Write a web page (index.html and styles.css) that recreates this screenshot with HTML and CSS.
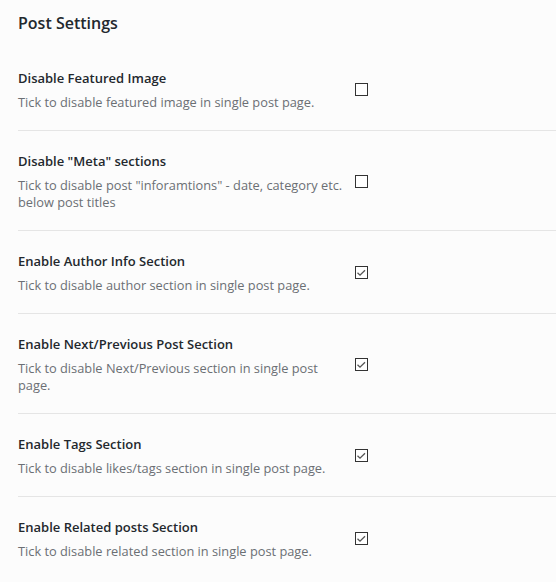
FILE: index.html
```html
<!DOCTYPE html>
<html>
<head>
<meta charset="utf-8">
<link rel="stylesheet" href="styles.css">
</head>
<body>
<div class="page">
  <h2 class="title">Post Settings</h2>
  <div class="settings">
    <div class="row">
      <div class="text">
        <div class="label">Disable Featured Image</div>
        <div class="desc">Tick to disable featured image in single post page.</div>
      </div>
      <span class="box"></span>
    </div>
    <div class="row">
      <div class="text">
        <div class="label">Disable "Meta" sections</div>
        <div class="desc">Tick to disable post "inforamtions" - date, category etc. below post titles</div>
      </div>
      <span class="box"></span>
    </div>
    <div class="row">
      <div class="text">
        <div class="label">Enable Author Info Section</div>
        <div class="desc">Tick to disable author section in single post page.</div>
      </div>
      <span class="box"><svg viewBox="0 0 13 13" width="13" height="13"><path d="M2.5 6.8 L5 9.2 L10 4.2" fill="none" stroke="#555" stroke-width="1.3"/></svg></span>
    </div>
    <div class="row">
      <div class="text">
        <div class="label">Enable Next/Previous Post Section</div>
        <div class="desc">Tick to disable Next/Previous section in single post page.</div>
      </div>
      <span class="box"><svg viewBox="0 0 13 13" width="13" height="13"><path d="M2.5 6.8 L5 9.2 L10 4.2" fill="none" stroke="#555" stroke-width="1.3"/></svg></span>
    </div>
    <div class="row">
      <div class="text">
        <div class="label">Enable Tags Section</div>
        <div class="desc">Tick to disable likes/tags section in single post page.</div>
      </div>
      <span class="box"><svg viewBox="0 0 13 13" width="13" height="13"><path d="M2.5 6.8 L5 9.2 L10 4.2" fill="none" stroke="#555" stroke-width="1.3"/></svg></span>
    </div>
    <div class="row">
      <div class="text">
        <div class="label">Enable Related posts Section</div>
        <div class="desc">Tick to disable related section in single post page.</div>
      </div>
      <span class="box"><svg viewBox="0 0 13 13" width="13" height="13"><path d="M2.5 6.8 L5 9.2 L10 4.2" fill="none" stroke="#555" stroke-width="1.3"/></svg></span>
    </div>
  </div>
</div>
</body>
</html>
```
FILE: styles.css
```css
html, body {
  margin: 0;
  padding: 0;
  background: #fcfcfc;
}
body {
  font-family: "Open Sans", "Noto Sans", sans-serif;
  color: #23282d;
}
.page {
  padding-left: 18px;
}
.title {
  margin: 0;
  padding-top: 12px;
  font-size: 16px;
  line-height: 22px;
  font-weight: 600;
  color: #23282d;
}
.settings {
  margin-top: 14px;
}
.row {
  display: grid;
  grid-template-columns: 327px 13px;
  column-gap: 10px;
  align-items: center;
  padding: 20px 0 19px;
  border-bottom: 1px solid #e5e5e5;
}
.row:last-child {
  border-bottom: none;
}
.label {
  font-size: 13px;
  line-height: 20px;
  font-weight: 600;
  color: #23282d;
}
.desc {
  margin-top: 6px;
  font-size: 12.8px;
  line-height: 17px;
  color: #6b6f74;
}
.box {
  display: block;
  width: 11px;
  height: 11px;
  border: 1px solid #333;
  background: #fff;
  position: relative;
}
.box svg {
  position: absolute;
  left: -1px;
  top: -1px;
}
```
